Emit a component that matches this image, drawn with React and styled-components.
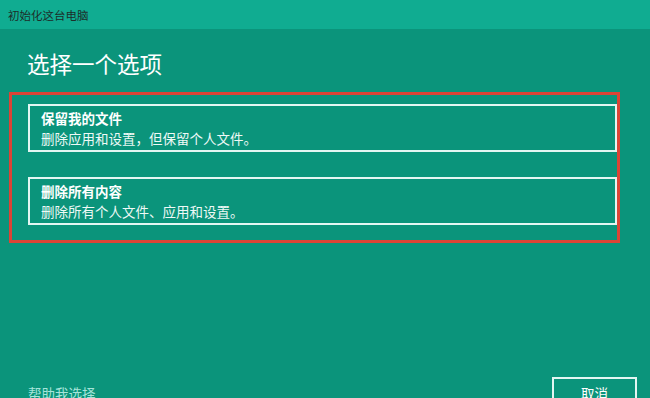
import * as React from 'react'
import styled, { createGlobalStyle } from 'styled-components'

const GlobalStyle = createGlobalStyle`
  html, body {
    margin: 0;
    padding: 0;
    overflow: hidden;
    background: #0b947b;
  }
  body {
    font-family: "Noto Sans CJK SC", "Noto Sans", sans-serif;
  }
`

const Window = styled.div`
  width: 650px;
  height: 398px;
  overflow: hidden;
  display: flex;
  flex-direction: column;
  background: #0b947b;
  color: #ffffff;
`

const TitleBar = styled.div`
  height: 29px;
  flex-shrink: 0;
  display: flex;
  align-items: center;
  padding-left: 8px;
  background: #10ac91;
  color: #1d2e2a;
  font-size: 11.5px;
`

const Main = styled.div`
  display: flex;
  flex-direction: column;
  padding: 19px 0 0 0;
`

const Heading = styled.h1`
  margin: 0 0 0 27px;
  font-size: 22.5px;
  font-weight: 400;
  line-height: 30px;
  color: #ffffff;
`

const Highlight = styled.div`
  margin: 14px 0 0 9px;
  width: 611px;
  box-sizing: border-box;
  border: 3px solid #dc4436;
  padding: 9px 0 15px 16px;
  display: flex;
  flex-direction: column;
  gap: 25px;
`

const OptionCard = styled.button`
  all: unset;
  box-sizing: border-box;
  height: 48px;
  border: 2px solid #e3f6f2;
  padding: 2px 11px;
  display: flex;
  flex-direction: column;
  cursor: pointer;
  color: #ffffff;
`

const OptionTitle = styled.div`
  font-size: 13.5px;
  font-weight: 700;
  line-height: 20px;
`

const OptionDesc = styled.div`
  font-size: 13.5px;
  line-height: 20px;
  color: #eef9f6;
`

const Footer = styled.div`
  margin-top: 134px;
  display: flex;
  justify-content: space-between;
  align-items: flex-start;
  padding: 0 13px 0 28px;
`

const HelpLink = styled.a`
  margin-top: 6px;
  font-size: 13.5px;
  line-height: 20px;
  color: #a6e4da;
  text-decoration: none;
  cursor: pointer;
`

const CancelButton = styled.button`
  all: unset;
  box-sizing: border-box;
  width: 85px;
  height: 32px;
  border: 2px solid #e3f6f2;
  display: flex;
  justify-content: center;
  padding-top: 4px;
  font-size: 13.5px;
  line-height: 20px;
  color: #ffffff;
  cursor: pointer;
`

const options = [
  { title: '保留我的文件', desc: '删除应用和设置，但保留个人文件。' },
  { title: '删除所有内容', desc: '删除所有个人文件、应用和设置。' }
]

export default function App() {
  return (
    <Window>
      <GlobalStyle />
      <TitleBar>初始化这台电脑</TitleBar>
      <Main>
        <Heading>选择一个选项</Heading>
        <Highlight>
          {options.map(o => (
            <OptionCard key={o.title}>
              <OptionTitle>{o.title}</OptionTitle>
              <OptionDesc>{o.desc}</OptionDesc>
            </OptionCard>
          ))}
        </Highlight>
        <Footer>
          <HelpLink>帮助我选择</HelpLink>
          <CancelButton>取消</CancelButton>
        </Footer>
      </Main>
    </Window>
  )
}
